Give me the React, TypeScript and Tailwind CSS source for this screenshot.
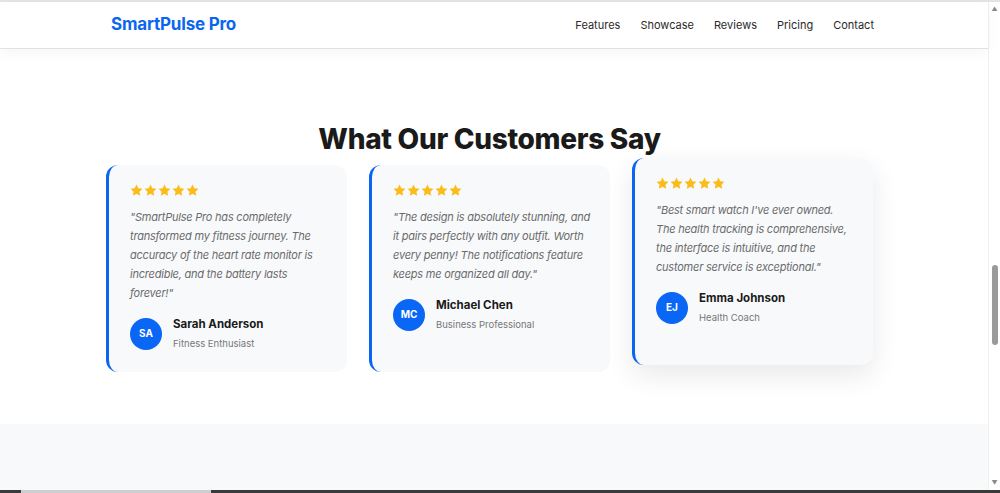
const NAV = ['Features', 'Showcase', 'Reviews', 'Pricing', 'Contact']

interface Review {
  id: string
  quote: string
  name: string
  role: string
  initials: string
  lifted?: boolean
}

const REVIEWS: Review[] = [
  {
    id: 'sarah',
    quote:
      '"SmartPulse Pro has completely transformed my fitness journey. The accuracy of the heart rate monitor is incredible, and the battery lasts forever!"',
    name: 'Sarah Anderson',
    role: 'Fitness Enthusiast',
    initials: 'SA',
  },
  {
    id: 'michael',
    quote:
      '"The design is absolutely stunning, and it pairs perfectly with any outfit. Worth every penny! The notifications feature keeps me organized all day."',
    name: 'Michael Chen',
    role: 'Business Professional',
    initials: 'MC',
  },
  {
    id: 'emma',
    quote:
      '"Best smart watch I\'ve ever owned. The health tracking is comprehensive, the interface is intuitive, and the customer service is exceptional."',
    name: 'Emma Johnson',
    role: 'Health Coach',
    initials: 'EJ',
    lifted: true,
  },
]

function Star() {
  return (
    <svg width="13" height="13" viewBox="0 0 24 24" className="fill-[#fbbc1a]">
      <path d="M12 1l3.3 6.9 7.6 1-5.5 5.3 1.4 7.5L12 18.1l-6.8 3.6 1.4-7.5L1.1 8.9l7.6-1z" />
    </svg>
  )
}

function ReviewCard({ review }: { review: Review }) {
  return (
    <div
      className={`flex flex-col rounded-xl border-l-[3px] border-[#0a66f0] bg-[#f8f9fb] pt-[19px] pb-[20px] pl-[21px] pr-[19px] ${
        review.lifted ? '-translate-y-[7px] shadow-[0_10px_28px_rgba(0,0,0,0.09)]' : ''
      }`}
    >
      <div className="flex gap-[1px]">
        {[0, 1, 2, 3, 4].map((i) => (
          <Star key={i} />
        ))}
      </div>
      <p className="mt-[11px] text-[11px] leading-[19px] tracking-[-0.22px] italic text-[#6b6b6b]">
        {review.quote}
      </p>
      <div className="mt-[12px] flex items-center gap-[11px]">
        <div className="flex h-8 w-8 shrink-0 items-center justify-center rounded-full bg-[#0a66f5] text-[10px] font-bold text-white">
          {review.initials}
        </div>
        <div className="flex flex-col">
          <span className="text-[11.5px] leading-[19px] font-bold text-[#1a1a1a]">{review.name}</span>
          <span className="mt-[1px] text-[9.5px] leading-[17px] text-[#777777]">{review.role}</span>
        </div>
      </div>
    </div>
  )
}

export default function App() {
  return (
    <div className="flex h-[493px] w-[1000px] flex-col overflow-hidden bg-white font-['Inter',sans-serif]">
      <div className="flex min-h-0 flex-1 border-t-2 border-[#e4e4e4]">
        {/* Page */}
        <div className="flex min-w-0 flex-1 flex-col">
          <header className="relative z-10 flex h-[47px] shrink-0 items-center justify-between border-b border-[#e2e2e2] bg-white pl-[111px] pr-[114px] shadow-[0_4px_12px_rgba(0,0,0,0.04)]">
            <span className="text-[17px] font-bold tracking-[-0.2px] text-[#0a66f0]">SmartPulse Pro</span>
            <nav className="flex gap-[20px]">
              {NAV.map((item) => (
                <span key={item} className="text-[11px] text-[#2a2a2a]">
                  {item}
                </span>
              ))}
            </nav>
          </header>

          {/* Testimonials */}
          <section className="shrink-0 bg-white pt-[73px] pb-[52px] pl-[106px]">
            <h2 className="w-[767px] text-center text-[28px] leading-[34px] font-extrabold tracking-[-0.3px] text-[#1a1a1a]">
              What Our Customers Say
            </h2>
            <div className="mt-[9px] grid w-[767px] grid-cols-3 gap-[22px]">
              {REVIEWS.map((r) => (
                <ReviewCard key={r.id} review={r} />
              ))}
            </div>
          </section>

          {/* Next section peeking */}
          <section className="flex-1 bg-[#f8f9fa] pt-[64px]">
            <h2 className="text-center text-[28px] leading-[34px] font-extrabold text-[#1a1a1a]">
              Technical Specifications
            </h2>
          </section>
        </div>

        {/* Scrollbar */}
        <div className="flex w-[12px] shrink-0 flex-col items-center border-l border-[#f0f0f0] bg-white py-[3px]">
          <span className="text-[6px] leading-[8px] text-[#888]">▲</span>
          <div className="h-[252px]" />
          <div className="h-[80px] w-[6px] rounded-full bg-[#9a9a9a]" />
          <div className="flex-1" />
          <span className="text-[6px] leading-[8px] text-[#888]">▼</span>
        </div>
      </div>
      <div className="flex h-[3px] shrink-0 bg-[#3a3a3a]">
        <div className="ml-[21px] w-[190px] bg-[#cfcfcf]" />
      </div>
    </div>
  )
}
